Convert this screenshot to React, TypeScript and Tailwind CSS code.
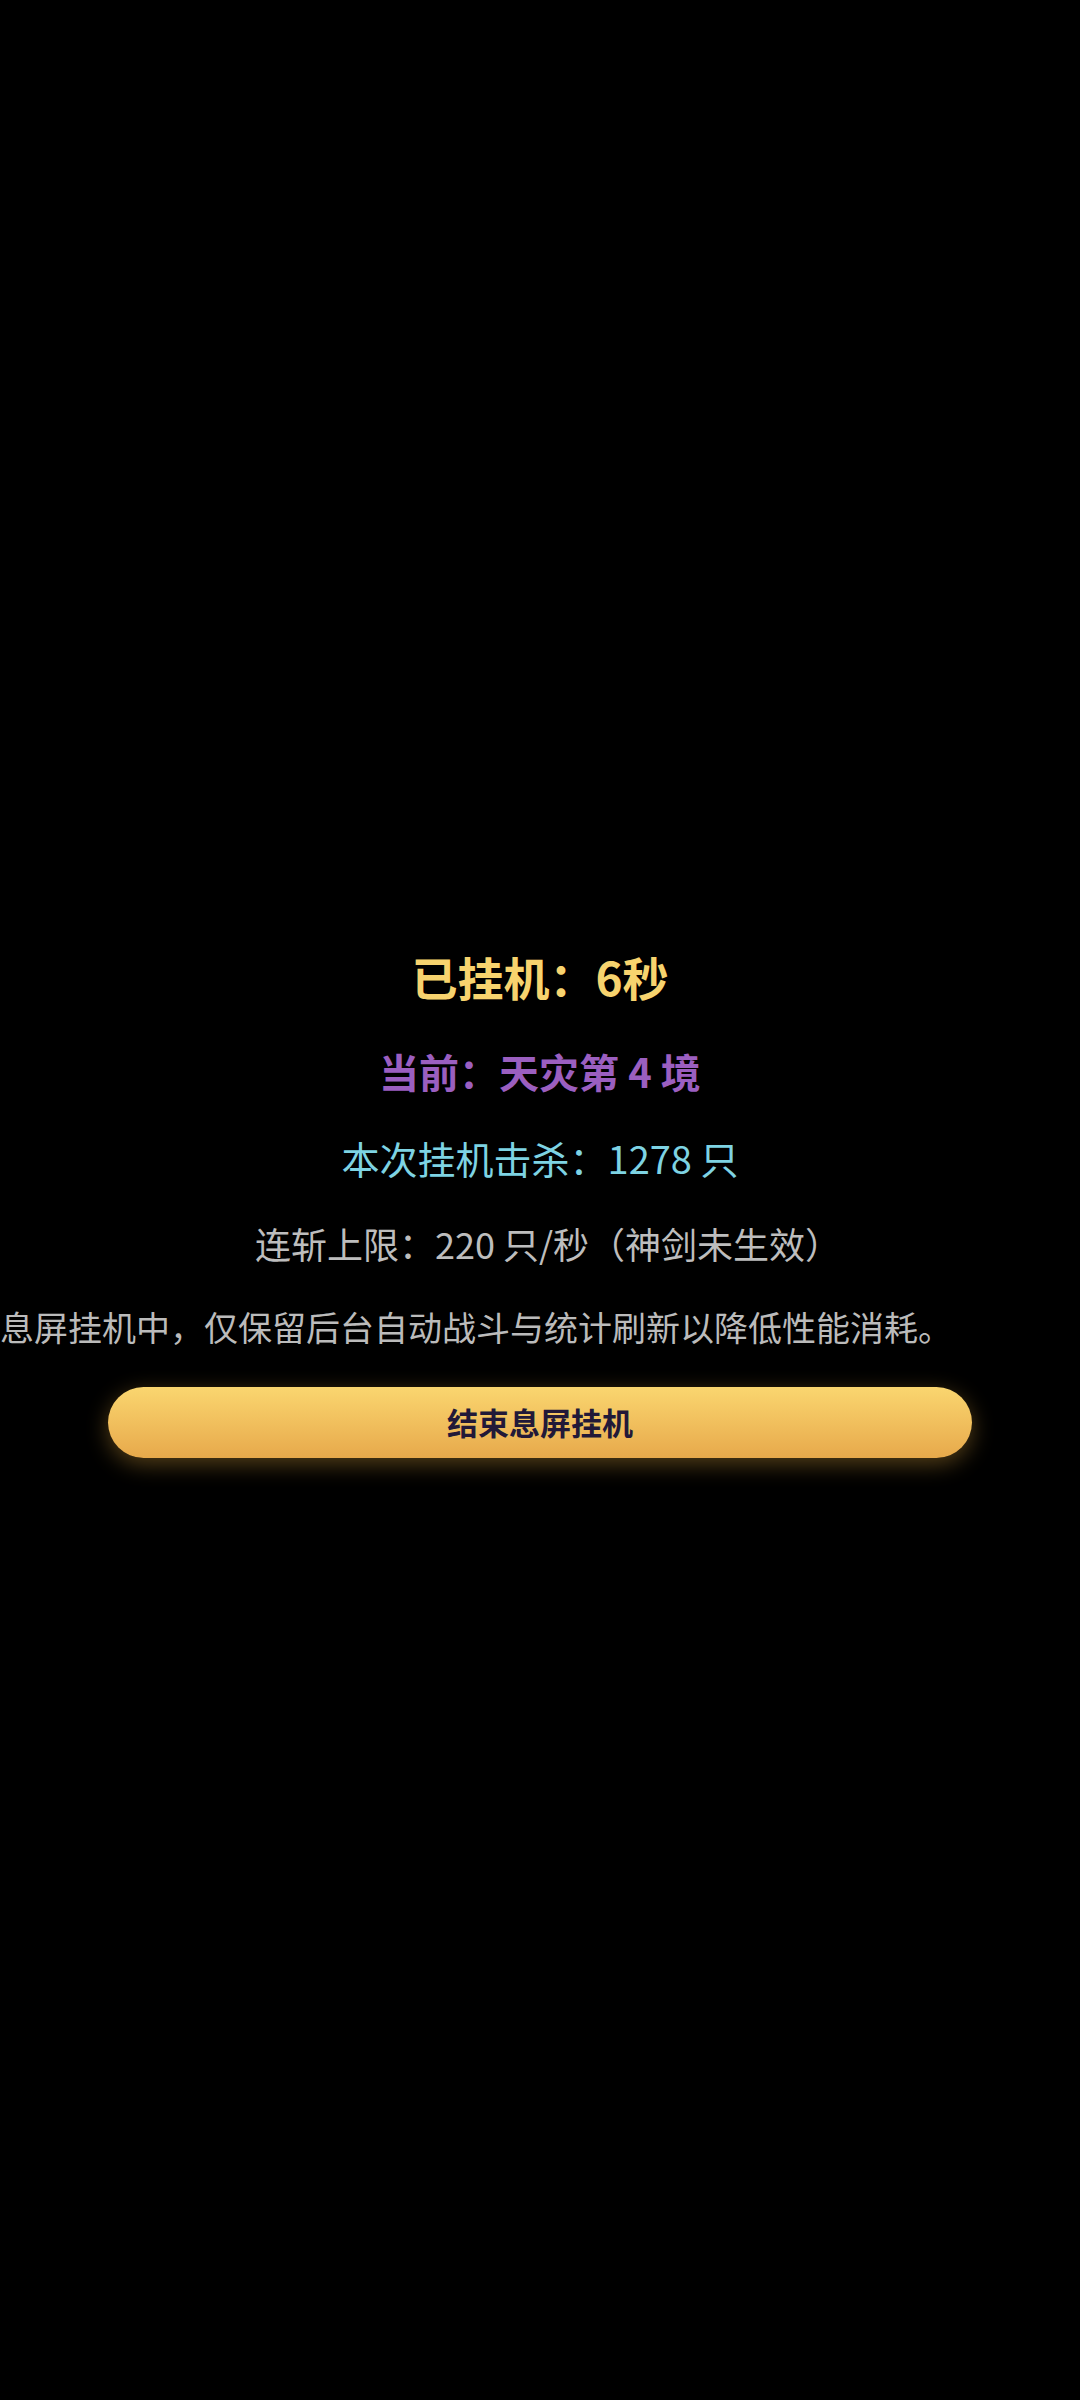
export default function App() {
  return (
    <div className="flex min-h-screen w-full flex-col items-center justify-center overflow-hidden bg-black pt-[6px] font-['Noto_Sans_CJK_SC','Noto_Sans',sans-serif]">
      <div className="text-[46px] font-bold leading-[56px] text-[#f7d36e]">已挂机：6秒</div>
      <div className="mt-[39px] text-[40px] font-bold leading-[56px] text-[#9b5fc0]">当前：天灾第 4 境</div>
      <div className="mt-[33px] text-[38px] leading-[52px] text-[#7ed3e3]">本次挂机击杀：1278 只</div>
      <div className="mt-[33px] pl-[16px] text-[36px] leading-[52px] text-[#bdbdbd]">连斩上限：220 只/秒（神剑未生效）</div>
      <div className="mt-[32px] self-stretch whitespace-nowrap text-left text-[34px] leading-[52px] text-[#bbbbbb]">
        息屏挂机中，仅保留后台自动战斗与统计刷新以降低性能消耗。
      </div>
      <button className="mt-[34px] flex h-[71px] w-[864px] items-center justify-center rounded-full bg-gradient-to-b from-[#fad66f] to-[#e7a94b] text-[31px] font-bold text-[#221938] shadow-[0_6px_22px_rgba(240,180,70,0.35)]">
        结束息屏挂机
      </button>
    </div>
  );
}
